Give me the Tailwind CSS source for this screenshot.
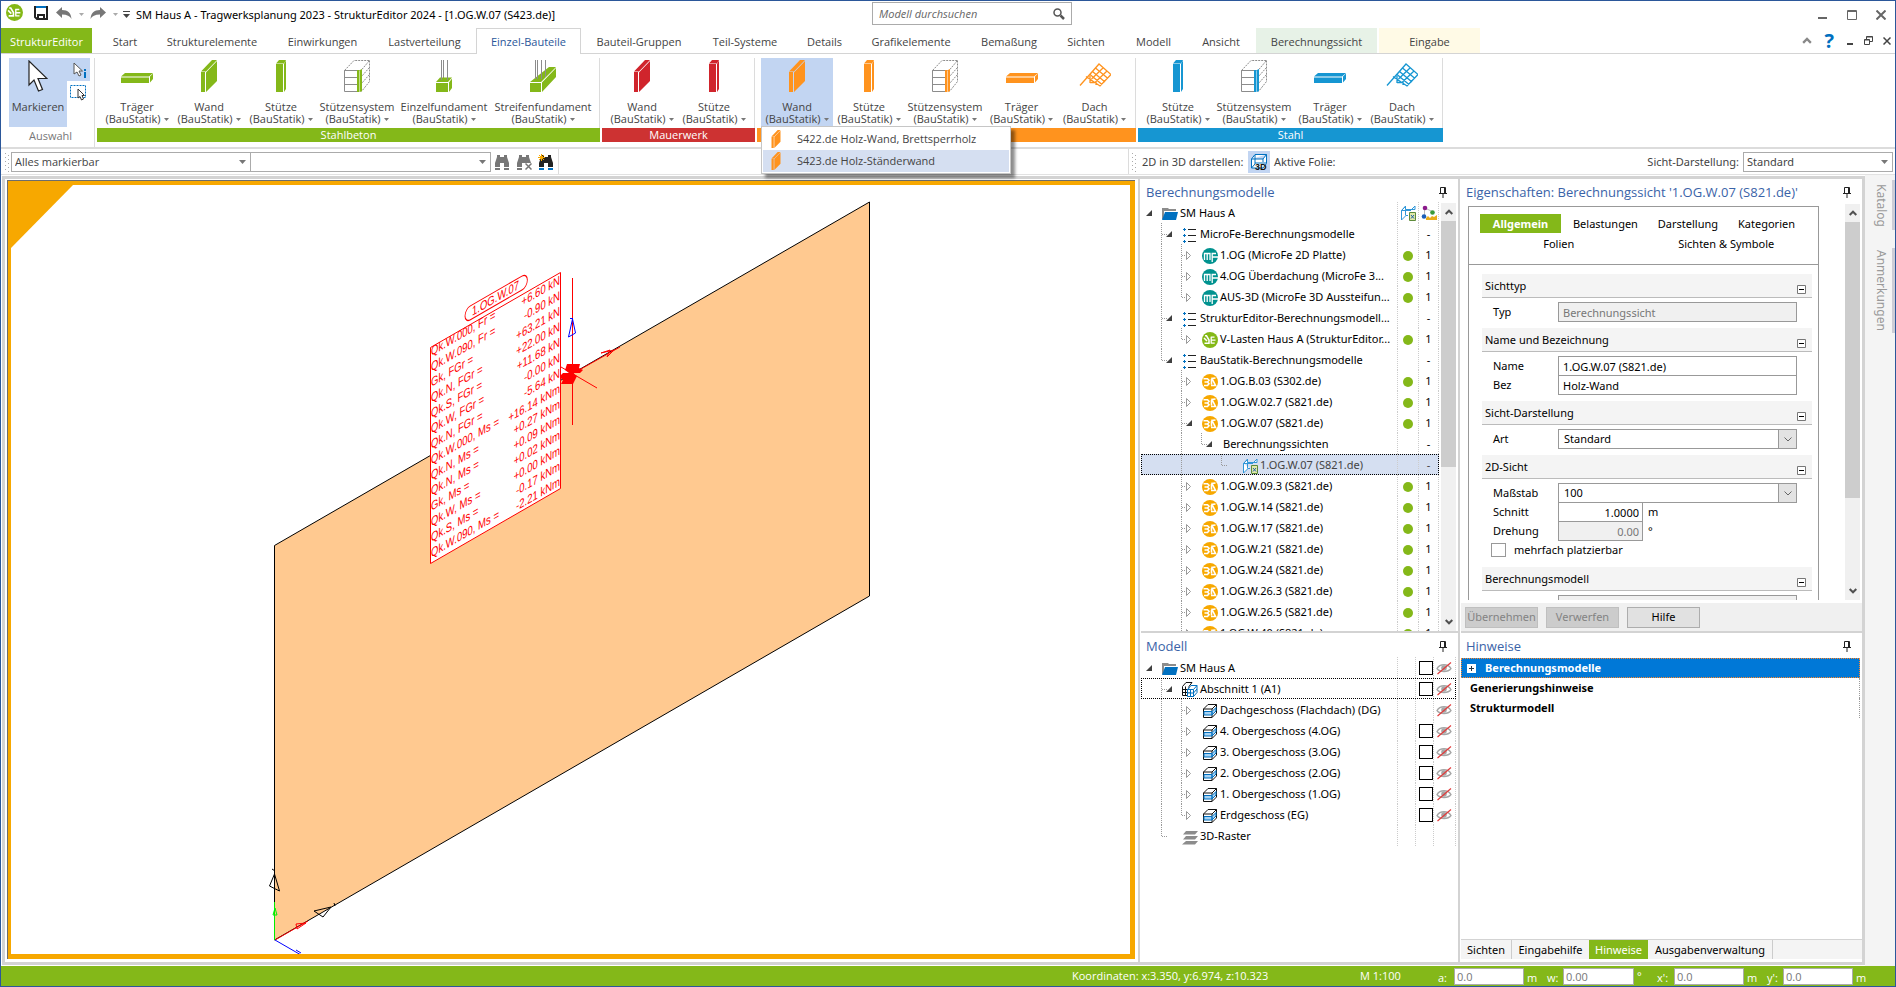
<!doctype html>
<html lang="de" class="h-full">

<head>
    <meta charset="utf-8">
    <meta name="viewport" content="width=device-width, initial-scale=1">
    <title>SM Haus A - Tragwerksplanung 2023 - StrukturEditor 2024</title>
    <script src="https://cdn.jsdelivr.net/npm/@tailwindcss/browser@4"></script>
</head>

<body class="flex h-full flex-col overflow-hidden border border-[#2b579a] bg-white font-['Open_Sans','Noto_Sans',sans-serif] text-[11px] leading-[16px] text-[#444]">

    <!-- Symbole -->
    <svg class="hidden">
        <symbol id="beam" viewBox="0 0 32 32"><path fill="currentColor" d="M0 16.500 4 13h28l-4 3.500zM0 17.500h28V23H0zM29 16.500l3-3V19l-3 3.500z"/></symbol>
        <symbol id="wall" viewBox="0 0 32 32"><path fill="currentColor" d="M8 11.500 19 0h5L13 11.500zM8 12h4v20H8zM13 12.500 24 1v20L13 32z"/></symbol>
        <symbol id="column" viewBox="0 0 32 32"><path fill="currentColor" d="M11 3.500 14 0h7l-2 3.500zM11 4h7v28h-7zM19 4l2-3.500V29l-2 3z"/></symbol>
        <symbol id="system" viewBox="0 0 32 32">
            <path fill="none" stroke="#8c8c8c" stroke-dasharray="2 1" d="M3.500 10.500 13 .5h15.500L20 10.500zM28.500 .5v21M28.500 7.500l-8 9M28.500 14.500l-8 9M28.500 21.500l-8 10"/>
            <path fill="none" stroke="#8c8c8c" d="M3.500 10.500v21H16M3.500 17.500H16M3.500 24.500H16M3.500 10.500H16"/>
            <path fill="currentColor" d="M16 10h2.500v22H16zM19 10l2-1v22l-2 1z"/>
        </symbol>
        <symbol id="pad" viewBox="0 0 32 32">
            <path fill="none" stroke="#8c8c8c" d="M13.500 0v19M15.500 0v19M19.500 0v18"/>
            <path fill="currentColor" d="M8 22l4-4.500h12L20 22zM8 23h12v9H8zM21 22.500l3-4V28l-3 4z"/>
            <path fill="none" stroke="#8c8c8c" d="M13.500 14v6M19.500 14v6"/>
        </symbol>
        <symbol id="strip" viewBox="0 0 32 32">
            <path fill="currentColor" d="M3 22 22 7h7L14 22zM3 23h11v9H3zM15 22.500 29 8v9L15 32z"/>
            <path fill="none" stroke="#8c8c8c" d="M8.500 0v19M10.500 0v19M14.500 0v19M18.500 0v17"/>
        </symbol>
        <symbol id="roof" viewBox="0 0 32 32"><path fill="none" stroke="currentColor" stroke-width="1.300" d="M1 25.500 20 4l12 10.500-11 11.500L7 16.500M11 22.500h6M11 14.500l12 10M13.500 11.500 26 22M16.500 8 29 18.500M16.500 22 28 11M12.500 19 24 8M9.500 16 20 4M17 21v4M11 16v7"/></symbol>
        <symbol id="se" viewBox="0 0 16 16"><circle cx="8" cy="8" r="8" fill="#84b816"/><path fill="none" stroke="#fff" stroke-width="1.500" d="M3 3.800h1.500L7 8v3.200H2.500M2 6l3 3"/><path fill="none" stroke="#fff" stroke-width="1.300" d="M8.700 5.200h3.800M8.700 8.200h4.800M8.700 11.200h4M9.200 5v6.500"/></symbol>
        <symbol id="mf" viewBox="0 0 16 16"><circle cx="8" cy="8" r="8" fill="#00928f"/><path fill="none" stroke="#fff" stroke-width="1.300" d="M2.500 12V5.500H8V12M5.200 6v6M10.200 14V5.500H14M10.200 9H16"/></symbol>
        <symbol id="bs" viewBox="0 0 16 16"><circle cx="8" cy="8" r="8" fill="#f7a800"/><path fill="none" stroke="#fff" stroke-width="1.600" d="M1.500 4.800h4L7 6.300 5.500 8h-3M5.500 8 7 9.700l-1.500 1.800H2"/><path fill="none" stroke="#fff" stroke-width="1.600" d="M13.500 4 10 4.500l3.500 7H9M9.500 5v5.500"/></symbol>
        <symbol id="folder" viewBox="0 0 16 16"><path fill="#8c8c8c" d="M0 2h6l1 1h7v2H2v8L0 13z"/><path fill="#0070c0" d="M3 6h13l-2 8H0z"/></symbol>
        <symbol id="list" viewBox="0 0 16 16"><path fill="#0070c0" d="M1 2h1V1h1v1h1v1H3v1H2V3H1zM1 8h1V7h1v1h1v1H3v1H2V9H1zM1 14h1v-1h1v1h1v1H3v1H2v-1H1z"/><path fill="#222" d="M6 2h8v1H6zM6 8h8v1H6zM6 14h8v1H6z"/></symbol>
        <symbol id="view" viewBox="0 0 16 16"><path fill="#fff" stroke="#2f96d8" d="M1.500 5.500 5.500 1v3.500H15V1L11.500 4.500M1.500 5.500H11M1.500 5.500V15L6 10.500h2M5.500 4.500v6M5.500 1.500 1.500 5.500"/><path fill="#dfe8a8" stroke="#5d8a3a" d="M9.500 7.500h6v8h-6z"/><path stroke="#1d5fa8" d="M11 10l3 3.500M14 10l-3 3.500"/></symbol>
        <symbol id="graph" viewBox="0 0 16 16"><path stroke="#bbb" fill="none" d="M4 3l8 4M3.500 3v8"/><circle cx="4" cy="3" r="2.300" fill="#8b1a8b"/><circle cx="11.500" cy="7.500" r="2.300" fill="#3a9a3a"/><circle cx="3" cy="11.500" r="2.300" fill="#1d5fb8"/><path fill="#e8ad1a" d="M5 15v-2l2-2 2 2 2-2 2 1 3-2v5z"/></symbol>
        <symbol id="section" viewBox="0 0 16 16"><path fill="#fff" stroke="#111" d="M.5 4.500 4 .5h6L7 4.500v9H.5zM.5 7.500H7M.5 10.500H7M3.500 4.500v9"/><path fill="#fff" stroke="#0070c0" d="M5.500 7.500 9 3.500h6v7l-3.500 4h-6zM5.500 7.500h6l3.500-4M11.500 7.500v7M5.500 11h6L15 7M8.500 7.500v7"/></symbol>
        <symbol id="storey" viewBox="0 0 16 16"><path fill="#fff" stroke="#111" d="M1.500 6 6 1.500h8.500V10L10 14.500H1.500zM1.500 6H10l4.500-4.500M10 6v8.500"/><path fill="#a8d3f3" stroke="#0070c0" d="M2 8.500h8v3.500H2zM10 8.500 14 4.500V8l-4 4z"/></symbol>
        <symbol id="raster" viewBox="0 0 16 16"><path fill="#8c8c8c" d="M4 2h12l-3 3.500H1zM4 7h12l-3 3.500H1zM4 12h12l-3 3.500H0z"/></symbol>
        <symbol id="eye" viewBox="0 0 16 16"><path fill="none" stroke="#a5a5a5" stroke-width="1.300" d="M1 8.500C4 3.500 12 3.500 15 8.500 12 12.500 4 12.500 1 8.500z"/><circle cx="8" cy="8" r="2.800" fill="#a5a5a5"/><path stroke="#e23b3b" stroke-width="1.200" d="M1.500 14 15 2.500"/></symbol>
        <symbol id="pin" viewBox="0 0 10 12"><path fill="none" stroke="#222" d="M2.500 7V1.500h5V7M1 7.500h8M5 8v4M6.500 2v5"/></symbol>
        <symbol id="binoculars" viewBox="0 0 16 16"><path fill="currentColor" d="M3 1h3v2h4V1h3v2l2 6v4h-5V9H6v4H1V9l2-6z"/><path fill="var(--foot)" d="M1 14h5v2H1zM10 14h5v2h-5z"/></symbol>
        <symbol id="caret" viewBox="0 0 7 4"><path fill="currentColor" d="M0 0h7L3.500 4z"/></symbol>
        <symbol id="up" viewBox="0 0 8 6"><path fill="none" stroke="currentColor" stroke-width="2" d="M.7 5 4 1.700 7.300 5"/></symbol>
        <symbol id="down" viewBox="0 0 8 6"><path fill="none" stroke="currentColor" stroke-width="2" d="M.7 1 4 4.300 7.300 1"/></symbol>
        <symbol id="cursor" viewBox="0 0 20 32"><path fill="#fff" stroke="#222" stroke-width="1.200" d="M1 1v24l5-5 4.500 11 4-1.500-4.500-11h9z"/></symbol>
        <!-- Baumlinien -->
        <symbol id="guide-I" viewBox="0 0 20 21"><path stroke="#999" stroke-dasharray="1 1" d="M.5 0v21"/></symbol>
        <symbol id="guide-T" viewBox="0 0 20 21"><path stroke="#999" stroke-dasharray="1 1" d="M.5 0v21M1 11.500h5"/></symbol>
        <symbol id="guide-L" viewBox="0 0 20 21"><path stroke="#999" stroke-dasharray="1 1" d="M.5 0v11M1 11.500h6"/></symbol>
        <symbol id="guide-N" viewBox="0 0 20 21"></symbol>
        <symbol id="tw-open" viewBox="0 0 20 21"><path fill="#404040" d="M5 14h6V8z"/></symbol>
        <symbol id="tw-closed" viewBox="0 0 20 21"><path fill="#fff" stroke="#999" d="M5.500 7.500v8l4-4z"/></symbol>
        <symbol id="tw-none" viewBox="0 0 20 21"></symbol>
    </svg>

    <!-- Titelleiste -->
    <header class="relative flex h-[27px] shrink-0 items-center pt-1 pl-[5px] text-black">
        <svg class="mb-2 size-[17px]"><use href="#se"/></svg>
        <button aria-label="Speichern" class="mb-2 ml-[11px]"><svg class="h-[14px] w-[14px]" viewBox="0 0 14 14"><path fill="none" stroke="#222" stroke-width="2" d="M1 1h12v12H3L1 11zM4 13V9h6v4"/><path fill="#0070c0" d="M2 0h10v2H2z"/></svg></button>
        <button aria-label="Rückgängig" class="mb-2 ml-2"><svg class="h-[12px] w-4" viewBox="0 0 16 12"><path fill="#777" d="M6 0v3c6 0 9 3 9.500 9C14 9 11 7.500 6 7.500V11L0 5.500z"/></svg></button>
        <svg class="mb-1 ml-[7px] h-[3px] w-[5px] text-[#aaa]"><use href="#caret"/></svg>
        <button aria-label="Wiederholen" class="mb-2 ml-[6px]"><svg class="h-[12px] w-4" viewBox="0 0 16 12"><path fill="#777" d="M10 0v3C4 3 1 6 .5 12 2 9 5 7.500 10 7.500V11l6-5.500z"/></svg></button>
        <svg class="mb-1 ml-[7px] h-[3px] w-[5px] text-[#aaa]"><use href="#caret"/></svg>
        <svg class="mb-1 ml-[5px] h-[7px] w-[7px]" viewBox="0 0 7 7"><path fill="#444" d="M0 0h7v1H0zM0 3h7L3.500 7z"/></svg>
        <h1 class="mb-1 ml-[6px] font-['Noto_Sans','Open_Sans',sans-serif] whitespace-nowrap">SM Haus A - Tragwerksplanung 2023 - StrukturEditor 2024 - [1.OG.W.07 (S423.de)]</h1>
        <label class="absolute top-[1px] left-[871px] flex h-[23px] w-[200px] items-center border border-[#ababab] bg-white px-[6px]">
            <input type="text" aria-label="Modell durchsuchen" placeholder="Modell durchsuchen" class="min-w-0 flex-1 italic outline-none placeholder:text-[#666]">
            <svg class="size-3" viewBox="0 0 12 12"><circle cx="4.500" cy="4.500" r="3.500" fill="none" stroke="#555" stroke-width="1.500"/><path stroke="#555" stroke-width="2.500" d="M7.500 7.500 11 11"/></svg>
        </label>
        <div class="mb-1 ml-auto flex items-center gap-[19px] pr-[9px]">
            <button aria-label="Minimieren"><svg class="size-[10px]" viewBox="0 0 10 10"><path fill="#666" d="M0 7h9v2H0z"/></svg></button>
            <button aria-label="Maximieren"><svg class="size-[10px]" viewBox="0 0 10 10"><path fill="none" stroke="#666" d="M.5 .5h9v9h-9zM0 1.500h10"/></svg></button>
            <button aria-label="Schließen"><svg class="size-[10px]" viewBox="0 0 10 10"><path stroke="#666" stroke-width="2" d="M.5 .5l9 9M9.500 .5l-9 9"/></svg></button>
        </div>
    </header>

    <!-- Registerkarten -->
    <nav class="flex h-[26px] shrink-0 items-stretch border-b border-[#d4d4d4] whitespace-nowrap">
        <button class="w-[91px] bg-[#84b819] pt-[2px] text-white">StrukturEditor</button>
        <button class="ml-[6px] w-[54px] pt-[2px]">Start</button>
        <button class="w-[120px] pt-[2px]">Strukturelemente</button>
        <button class="w-[101px] pt-[2px]">Einwirkungen</button>
        <button class="w-[103px] pt-[2px]">Lastverteilung</button>
        <button class="-mb-px w-[105px] border border-b-0 border-[#d4d4d4] bg-white pt-px text-[#2b579a]">Einzel-Bauteile</button>
        <button class="w-[116px] pt-[2px]">Bauteil-Gruppen</button>
        <button class="w-[96px] pt-[2px]">Teil-Systeme</button>
        <button class="w-[63px] pt-[2px]">Details</button>
        <button class="w-[110px] pt-[2px]">Grafikelemente</button>
        <button class="w-[86px] pt-[2px]">Bemaßung</button>
        <button class="w-[68px] pt-[2px]">Sichten</button>
        <button class="w-[67px] pt-[2px]">Modell</button>
        <button class="w-[68px] pt-[2px]">Ansicht</button>
        <button class="ml-px w-[121px] bg-[#e7f2e7] pt-[2px]">Berechnungssicht</button>
        <button class="ml-[2px] w-[101px] bg-[#fffae6] pt-[2px]">Eingabe</button>
        <div class="ml-auto flex items-center gap-[10px] pr-1">
            <svg class="h-[7px] w-[10px] text-[#888]"><use href="#up"/></svg>
            <button class="px-[2px] text-[20px] font-bold text-[#0070c0]">?</button>
            <button aria-label="Fenster minimieren"><svg class="size-2" viewBox="0 0 8 8"><path fill="#444" d="M1 6h6v2H1z"/></svg></button>
            <button aria-label="Fenster wiederherstellen"><svg class="size-[9px]" viewBox="0 0 9 9"><path fill="none" stroke="#444" d="M2.500 3V.5h6v5H6M.5 3.500h5v5h-5zM.5 4h5M2.500 1h6"/></svg></button>
            <button aria-label="Fenster schließen"><svg class="size-2" viewBox="0 0 8 8"><path stroke="#444" stroke-width="1.500" d="M.5 .5l7 7M7.500 .5l-7 7"/></svg></button>
        </div>
    </nav>

    <!-- Menüband -->
    <section class="flex h-[95px] shrink-0 border-b-2 border-[#dcdcdc] pt-1 pl-2">
        <div class="mr-[2px] flex w-[86px] flex-col border-r border-[#dcdcdc]">
            <div class="flex">
                <button class="flex h-[69px] w-[58px] flex-col items-center bg-[#c2d5f2] pt-[2px]">
                    <svg class="h-[32px] w-5"><use href="#cursor"/></svg>
                    <span class="mt-2 leading-[14px]">Markieren</span>
                </button>
                <div class="flex flex-col">
                    <button aria-label="Info" class="h-[23px] w-[23px] bg-[#c2d5f2] pl-[6px]"><svg class="h-4 w-[14px]" viewBox="0 0 14 16"><path fill="#fff" stroke="#555" d="M1 1v11l3-2 2 4 2-1-2-4h3.500z"/><path fill="#0070c0" d="M11 7h2v2h-2zM11 10h2v6h-2z"/></svg></button>
                    <button aria-label="Bereich" class="h-[23px] w-[23px] pl-[3px]"><svg class="size-4" viewBox="0 0 16 16"><path fill="none" stroke="#0070c0" stroke-dasharray="2 1" d="M.5 .5h15v12H.5z"/><path fill="#fff" stroke="#333" d="M8 4v9l2-1.500L11.500 15l2-1-1.500-3.500h2.500z"/></svg></button>
                </div>
            </div>
            <span class="pl-5 leading-[18px] text-[#777]">Auswahl</span>
        </div>
        <div id="ribbon" class="flex flex-1"></div>
    </section>

    <!-- Werkzeugleiste -->
    <section class="flex h-[26px] shrink-0 items-center border-b border-[#e2e2e2]">
        <div class="ml-[3px] flex h-full items-center">
            <svg class="mr-[1px] h-5 w-[6px]" viewBox="0 0 6 20"><path stroke="#aaa" stroke-dasharray="1 3" d="M1.500 1v18M4.500 3v17"/></svg>
            <div class="relative">
                <select aria-label="Markierfilter" class="h-5 w-[240px] appearance-none border border-[#ababab] bg-white pl-[3px]"><option>Alles markierbar</option></select>
                <svg class="pointer-events-none absolute top-2 right-[5px] h-1 w-[7px] text-[#777]"><use href="#caret"/></svg>
            </div>
            <div class="relative -ml-px">
                <select aria-label="Suchfilter" class="h-5 w-[241px] appearance-none border border-[#ababab] bg-white pl-[3px]"><option></option></select>
                <svg class="pointer-events-none absolute top-2 right-[5px] h-1 w-[7px] text-[#777]"><use href="#caret"/></svg>
            </div>
            <button aria-label="Suchen" class="ml-[3px] text-[#777] [--foot:#777]"><svg class="size-4"><use href="#binoculars"/></svg></button>
            <button aria-label="Suche löschen" class="relative ml-[6px] text-[#777] [--foot:#777]"><svg class="size-4"><use href="#binoculars"/></svg><svg class="absolute right-0 bottom-0 size-[7px] bg-white" viewBox="0 0 7 7"><path stroke="#777" stroke-width="1.500" d="M.5 .5l6 6M6.500 .5l-6 6"/></svg></button>
            <button aria-label="Erweitert suchen" class="relative ml-[6px] text-[#222] [--foot:#0070c0]"><svg class="size-4"><use href="#binoculars"/></svg><svg class="absolute top-0 left-0 size-[7px]" viewBox="0 0 7 7"><path stroke="#f7a800" d="M3.500 0v7M0 3.500h7M1 1l5 5M6 1 1 6"/></svg></button>
            <div class="ml-1 h-full border-r border-[#dcdcdc]"></div>
        </div>
        <div class="ml-auto flex h-full w-[767px] items-center border-l border-[#dcdcdc] pr-[2px] font-['Noto_Sans','Open_Sans',sans-serif]">
            <svg class="ml-[2px] h-5 w-[6px]" viewBox="0 0 6 20"><path stroke="#aaa" stroke-dasharray="1 3" d="M1.500 1v18M4.500 3v17"/></svg>
            <span class="ml-[5px] w-[106px] whitespace-nowrap">2D in 3D darstellen:</span>
            <button aria-label="3D" class="flex h-[22px] w-[22px] items-center justify-center bg-[#c2d5f2]"><svg class="size-[18px]" viewBox="0 0 18 18"><path fill="#fff" stroke="#0070c0" d="M1.500 6 5 1.500h11.500v9L13 15H1.500zM1.500 6H13l3.500-4.500M13 6v3M5 2v9l-3.500 4M5 10h11"/><text x="5" y="17" font-size="9" font-weight="700" font-family="Liberation Sans" fill="#111">3D</text></svg></button>
            <span class="ml-1">Aktive Folie:</span>
            <label for="darstellung" class="ml-auto mr-1">Sicht-Darstellung:</label>
            <div class="relative">
                <select id="darstellung" class="h-5 w-[150px] appearance-none border border-[#ababab] bg-white pl-[3px]"><option>Standard</option></select>
                <svg class="pointer-events-none absolute top-2 right-[5px] h-1 w-[7px] text-[#777]"><use href="#caret"/></svg>
            </div>
        </div>
    </section>

    <!-- Arbeitsbereich -->
    <main class="flex min-h-0 flex-1 font-['Noto_Sans','Open_Sans',sans-serif]">
        <div class="my-px ml-px flex min-w-0 flex-1 border-[3px] border-[#d3d3d3]">
            <div class="min-w-0 flex-1 pt-px pr-[3px] pb-[3px] pl-[2px]">
                <div class="h-full border-t border-l border-[#6d6d6d]">
                    <div class="h-full border-t-4 border-r-[5px] border-b-[5px] border-l-[3px] border-[#f7a800]">
                        <svg id="canvas" class="block h-full w-full" viewBox="11 185 1119 769" preserveAspectRatio="xMinYMin meet">
                            <path fill="#f7a800" d="M11 185h62L11 248z"/>
                            <path fill="#ffc990" stroke="#000" d="M274.500 545.500 869.500 202v394L274.500 940z"/>
                            <!-- Knoten mit Lastpfeilen -->
                            <path stroke="#f00" fill="none" d="M561 367l36 21M572 374l48-27M601 353l13-3-7 7 3-7-9 3"/>
                            <path stroke="#f00" d="M572.500 278v147"/>
                            <path fill="#f00" d="M567 364h13l-1 4 4 2-3 3h-7l4 3-4 8h-12l2-4-4-3 4-4h6l-4-3z"/>
                            <path stroke="#00f" fill="none" d="M568.500 337l4-18 3 14-7 4M570 318.500h3"/>
                            <!-- Lastetikett -->
                            <path fill="#fff" stroke="#f00" d="M430.500 347.500 560.500 272.500v216l-130 75z"/>
                            <g fill="none" stroke="#f00"><rect width="72" height="12" rx="6" transform="translate(465 309) rotate(-30) skewX(-30)"/></g>
                            <g id="loads" fill="#f00" font-family="Liberation Sans, sans-serif" font-size="11"></g>
                            <!-- Achsenkreuz -->
                            <path stroke="#000" fill="none" d="M274.500 874l-5 12 10 5zM272 869l3 2M331 907l-17 4 9 6zM334 903l1 3"/>
                            <path stroke="#0e0" fill="none" d="M274.500 940v-38M275 908l-2 7h4z"/>
                            <path stroke="#f00" fill="none" d="M275 940l33-19M296 924l10-1-9 6z"/>
                            <path stroke="#00f" fill="none" d="M275 940l26 15M296 950l5 3"/>
                        </svg>
                    </div>
                </div>
            </div>

            <!-- Berechnungsmodelle / Modell -->
            <div class="flex w-[320px] flex-col border-l-2 border-[#d3d3d3] pl-px text-black">
                <section class="flex min-h-0 flex-[452_452_0px] flex-col">
                    <header class="flex h-[23px] shrink-0 items-center pt-[2px] pr-[10px] pl-[5px]"><h2 class="flex-1 font-['Open_Sans','Noto_Sans',sans-serif] text-[13px] text-[#3a63a8]">Berechnungsmodelle</h2><svg class="h-3 w-[10px]"><use href="#pin"/></svg></header>
                    <div class="flex min-h-0 flex-1">
                        <ul id="calc-tree" class="mr-[2px] min-w-0 flex-1 overflow-hidden"></ul>
                        <div class="mt-px mr-[2px] flex w-[15px] flex-col items-center bg-[#f0f0f0] text-[#505050]">
                            <svg class="my-[6px] h-[6px] w-2 shrink-0"><use href="#up"/></svg>
                            <div class="w-full flex-[245_245_0px] bg-[#cdcdcd]"></div>
                            <div class="flex-[146_146_0px]"></div>
                            <svg class="my-[6px] h-[6px] w-2 shrink-0"><use href="#down"/></svg>
                        </div>
                    </div>
                </section>
                <section class="flex min-h-0 flex-[329_329_0px] flex-col border-t-2 border-[#d3d3d3]">
                    <header class="flex h-[24px] shrink-0 items-center pt-px pr-[10px] pl-[5px]"><h2 class="flex-1 font-['Open_Sans','Noto_Sans',sans-serif] text-[13px] text-[#3a63a8]">Modell</h2><svg class="h-3 w-[10px]"><use href="#pin"/></svg></header>
                    <ul id="model-tree" class="mr-[2px]"></ul>
                </section>
            </div>

            <!-- Eigenschaften / Hinweise -->
            <div class="flex w-[404px] flex-col border-l-2 border-[#d3d3d3] pl-px text-black">
                <section class="flex min-h-0 flex-[452_452_0px] flex-col">
                    <header class="flex h-[25px] shrink-0 items-center pr-[10px] pl-[5px]"><h2 class="flex-1 font-['Open_Sans','Noto_Sans',sans-serif] text-[13px] whitespace-nowrap text-[#3a63a8]">Eigenschaften: Berechnungssicht '1.OG.W.07 (S821.de)'</h2><svg class="h-3 w-[10px]"><use href="#pin"/></svg></header>
                    <div class="mb-[3px] flex min-h-0 flex-1">
                        <div class="flex-1 overflow-hidden pt-[2px] pr-[26px] pl-[7px]">
                            <div class="h-[600px] border border-[#999]">
                                <nav class="h-[58px] border-b border-[#999] pt-[7px] pr-[23px] pl-[11px]">
                                    <div class="flex h-[19px] items-stretch justify-between whitespace-nowrap">
                                        <button class="w-[81px] bg-[#84b819] font-bold text-white">Allgemein</button>
                                        <button>Belastungen</button>
                                        <button class="ml-2">Darstellung</button>
                                        <button class="ml-2">Kategorien</button>
                                    </div>
                                    <div class="mt-px flex h-5 items-center">
                                        <button class="w-1/2">Folien</button>
                                        <button class="w-1/2 pl-5">Sichten &amp; Symbole</button>
                                    </div>
                                </nav>
                                <form id="props" class="mt-[9px] mr-[6px] ml-[13px]">
                                    <h3 class="flex h-6 items-center justify-between border-b border-[#bbb] bg-[#f4f4f4] pr-[6px] pl-[3px]">Sichttyp <svg class="mt-2 size-[9px]" viewBox="0 0 9 9"><path fill="#fff" stroke="#777" d="M.5 .5h8v8h-8z"/><path stroke="#000" d="M2 4.500h5"/></svg></h3>
                                    <div class="flex items-center pt-1 pb-[6px] pl-[11px]">
                                        <label for="typ" class="w-[65px]">Typ</label>
                                        <input id="typ" disabled value="Berechnungssicht" class="h-5 w-[239px] border border-[#999] bg-[#f0f0f0] px-1 text-[#777]">
                                    </div>
                                    <h3 class="flex h-6 items-center justify-between border-b border-[#bbb] bg-[#f4f4f4] pr-[6px] pl-[3px]">Name und Bezeichnung <svg class="mt-2 size-[9px]" viewBox="0 0 9 9"><path fill="#fff" stroke="#777" d="M.5 .5h8v8h-8z"/><path stroke="#000" d="M2 4.500h5"/></svg></h3>
                                    <div class="flex items-center pt-1 pl-[11px]">
                                        <label for="name" class="w-[65px]">Name</label>
                                        <input id="name" value="1.OG.W.07 (S821.de)" class="h-5 w-[239px] border border-[#999] px-1">
                                    </div>
                                    <div class="-mt-px flex items-center pb-[6px] pl-[11px]">
                                        <label for="bez" class="w-[65px]">Bez</label>
                                        <input id="bez" value="Holz-Wand" class="h-5 w-[239px] border border-[#999] px-1">
                                    </div>
                                    <h3 class="flex h-6 items-center justify-between border-b border-[#bbb] bg-[#f4f4f4] pr-[6px] pl-[3px]">Sicht-Darstellung <svg class="mt-2 size-[9px]" viewBox="0 0 9 9"><path fill="#fff" stroke="#777" d="M.5 .5h8v8h-8z"/><path stroke="#000" d="M2 4.500h5"/></svg></h3>
                                    <div class="flex items-center pt-1 pb-[6px] pl-[11px]">
                                        <label for="art" class="w-[65px]">Art</label>
                                        <div class="relative">
                                            <select id="art" class="block h-5 w-[239px] appearance-none border border-[#999] px-[5px]"><option>Standard</option></select>
                                            <span class="pointer-events-none absolute top-0 right-0 flex h-5 w-[19px] items-center justify-center border border-[#999] bg-[#e3e3e3]"><svg class="h-[5px] w-2" viewBox="0 0 8 5"><path fill="none" stroke="#666" d="M.5 .5 4 4 7.500 .5"/></svg></span>
                                        </div>
                                    </div>
                                    <h3 class="flex h-6 items-center justify-between border-b border-[#bbb] bg-[#f4f4f4] pr-[6px] pl-[3px]">2D-Sicht <svg class="mt-2 size-[9px]" viewBox="0 0 9 9"><path fill="#fff" stroke="#777" d="M.5 .5h8v8h-8z"/><path stroke="#000" d="M2 4.500h5"/></svg></h3>
                                    <div class="flex items-center pt-1 pl-[11px]">
                                        <label for="mass" class="w-[65px]">Maßstab</label>
                                        <div class="relative">
                                            <select id="mass" class="block h-5 w-[239px] appearance-none border border-[#999] px-[5px]"><option>100</option></select>
                                            <span class="pointer-events-none absolute top-0 right-0 flex h-5 w-[19px] items-center justify-center border border-[#999] bg-[#e3e3e3]"><svg class="h-[5px] w-2" viewBox="0 0 8 5"><path fill="none" stroke="#666" d="M.5 .5 4 4 7.500 .5"/></svg></span>
                                        </div>
                                    </div>
                                    <div class="-mt-px flex items-center pl-[11px]">
                                        <label for="schnitt" class="w-[65px]">Schnitt</label>
                                        <input id="schnitt" value="1.0000" class="h-5 w-[85px] border border-[#999] px-[3px] text-right">
                                        <span class="ml-[5px]">m</span>
                                    </div>
                                    <div class="-mt-px flex items-center pl-[11px]">
                                        <label for="drehung" class="w-[65px]">Drehung</label>
                                        <input id="drehung" disabled value="0.00" class="h-5 w-[85px] border border-[#999] bg-[#f0f0f0] px-[3px] text-right text-[#777]">
                                        <span class="ml-[5px]">°</span>
                                    </div>
                                    <div class="flex h-[26px] items-start pt-[2px] pl-[9px]">
                                        <input type="checkbox" id="mehrfach" class="mr-2 h-[14px] w-[15px] appearance-none border border-[#999]">
                                        <label for="mehrfach" class="leading-[14px]">mehrfach platzierbar</label>
                                    </div>
                                    <h3 class="flex h-6 items-center justify-between border-b border-[#bbb] bg-[#f4f4f4] pr-[6px] pl-[3px]">Berechnungsmodell <svg class="mt-2 size-[9px]" viewBox="0 0 9 9"><path fill="#fff" stroke="#777" d="M.5 .5h8v8h-8z"/><path stroke="#000" d="M2 4.500h5"/></svg></h3>
                                    <div class="flex items-center pt-1 pl-[11px]">
                                        <label for="modellname" class="w-[65px]">Name</label>
                                        <input id="modellname" disabled value="1.OG.W.07 (S821.de)" class="h-5 w-[239px] border border-[#999] bg-[#f0f0f0] px-1 text-[#777]">
                                    </div>
                                </form>
                            </div>
                        </div>
                        <div class="mr-[2px] flex w-[15px] flex-col items-center bg-[#f0f0f0] text-[#505050]">
                            <svg class="my-[6px] h-[6px] w-2 shrink-0"><use href="#up"/></svg>
                            <div class="w-full flex-[277_277_0px] bg-[#cdcdcd]"></div>
                            <div class="flex-[84_84_0px]"></div>
                            <svg class="my-[6px] h-[6px] w-2 shrink-0"><use href="#down"/></svg>
                        </div>
                    </div>
                    <div class="flex h-[28px] shrink-0 items-center gap-2 bg-[#f0f0f0] pl-1">
                        <button disabled class="h-[21px] w-[73px] border border-[#bfbfbf] bg-[#ccc] text-[#838383]">Übernehmen</button>
                        <button disabled class="h-[21px] w-[73px] border border-[#bfbfbf] bg-[#ccc] text-[#838383]">Verwerfen</button>
                        <button class="h-[21px] w-[73px] border border-[#adadad] bg-[#e1e1e1]">Hilfe</button>
                    </div>
                </section>
                <section class="flex min-h-0 flex-[326_326_0px] flex-col border-t-2 border-[#d3d3d3] pb-[3px]">
                    <header class="flex h-[25px] shrink-0 items-center pr-[10px] pl-[5px]"><h2 class="flex-1 font-['Open_Sans','Noto_Sans',sans-serif] text-[13px] text-[#3a63a8]">Hinweise</h2><svg class="h-3 w-[10px]"><use href="#pin"/></svg></header>
                    <ul class="mr-[2px] flex-1 font-bold">
                        <li class="flex h-5 items-center border border-dotted border-[#ff8728] bg-[#0078d7] pl-[5px] text-white"><svg class="mr-[9px] size-[9px]" viewBox="0 0 9 9"><path fill="#fff" d="M0 0h9v9H0z"/><path stroke="#234" d="M2 4.500h5M4.500 2v5"/></svg>Berechnungsmodelle</li>
                        <li class="flex h-5 items-center border-r border-dotted border-[#999] pl-[9px]">Generierungshinweise</li>
                        <li class="flex h-5 items-center border-r border-dotted border-[#999] pl-[9px]">Strukturmodell</li>
                    </ul>
                    <nav class="flex h-[20px] shrink-0 items-stretch border-t border-[#d3d3d3] bg-[#f4f4f4] whitespace-nowrap">
                        <button class="w-[51px] border-r border-[#ccc]">Sichten</button>
                        <button class="w-[77px]">Eingabehilfe</button>
                        <button class="w-[59px] bg-[#84b819] text-white">Hinweise</button>
                        <button class="w-[125px] border-r border-[#ccc]">Ausgabenverwaltung</button>
                    </nav>
                </section>
            </div>
        </div>
        <aside class="flex w-[30px] flex-col items-end bg-[#f4f4f4] pt-[5px] text-[12px] text-[#999]">
            <button class="flex h-[50px] w-[26px] items-center justify-center border-r-3 border-[#cdcdd6] [writing-mode:vertical-rl]">Katalog</button>
            <button class="mt-[18px] flex h-[85px] w-[26px] items-center justify-center border-r-3 border-[#cdcdd6] [writing-mode:vertical-rl]">Anmerkungen</button>
        </aside>
    </main>

    <!-- Statuszeile -->
    <footer class="flex h-[20px] shrink-0 items-center justify-end bg-[#84b819] pr-[24px] whitespace-nowrap text-white">
        <span class="w-[288px]">Koordinaten: x:3.350, y:6.974, z:10.323</span>
        <span class="w-[78px]">M 1:100</span>
        <label for="sa" class="w-4 pt-1">a:</label><input id="sa" value="0.0" class="h-[17px] w-[70px] border border-[#ababab] bg-white px-[2px] text-[#777]"><span class="w-[23px] pt-1 pl-[3px]">m</span>
        <label for="sw" class="w-4 pt-1">w:</label><input id="sw" value="0.00" class="h-[17px] w-[71px] border border-[#ababab] bg-white px-[2px] text-[#777]"><span class="w-[23px] pl-[3px]">°</span>
        <label for="sx" class="w-[17px] pt-1">x':</label><input id="sx" value="0.0" class="h-[17px] w-[70px] border border-[#ababab] bg-white px-[2px] text-[#777]"><span class="w-[23px] pt-1 pl-[3px]">m</span>
        <label for="sy" class="w-4 pt-1">y':</label><input id="sy" value="0.0" class="h-[17px] w-[70px] border border-[#ababab] bg-white px-[2px] text-[#777]"><span class="w-[18px] pt-1 pl-[3px]">m</span>
    </footer>

    <!-- Aufklappmenü Wand (BauStatik) -->
    <div role="menu" class="absolute top-[126px] left-[761px] w-[250px] border border-[#c6c6c6] bg-white p-px shadow-[4px_4px_3px_rgba(0,0,0,0.45)]">
        <button role="menuitem" class="flex h-[22px] w-full items-center pl-[4px]"><svg class="mr-[12px] size-[18px] text-[#ff931e]"><use href="#wall"/></svg>S422.de Holz-Wand, Brettsperrholz</button>
        <button role="menuitem" class="flex h-[22px] w-full items-center bg-[#d5dff1] pl-[4px]"><svg class="mr-[12px] size-[18px] text-[#ff931e]"><use href="#wall"/></svg>S423.de Holz-Ständerwand</button>
    </div>

    <script>
        // Menüband: Gruppen mit [Symbol, Text, Breitenklasse]
        const groups = [
            { name: 'Stahlbeton', bar: 'bg-[#84b819]', color: 'text-[#84b819]', items: [['beam', 'Träger', 'w-[72px]'], ['wall', 'Wand', 'w-[72px]'], ['column', 'Stütze', 'w-[72px]'], ['system', 'Stützensystem', 'w-[80px]'], ['pad', 'Einzelfundament', 'w-[94px]'], ['strip', 'Streifenfundament', 'w-[104px]']] },
            { name: 'Mauerwerk', bar: 'bg-[#cd3232]', color: 'text-[#d0242c]', items: [['wall', 'Wand', 'w-[72px]'], ['column', 'Stütze', 'w-[72px]']] },
            { name: '', bar: 'bg-[#ff931e]', color: 'text-[#ff931e]', items: [['wall', 'Wand', 'w-[72px] bg-[#c2d5f2]'], ['column', 'Stütze', 'w-[72px]'], ['system', 'Stützensystem', 'w-[80px]'], ['beam', 'Träger', 'w-[73px]'], ['roof', 'Dach', 'w-[73px]']] },
            { name: 'Stahl', bar: 'bg-[#1696d2]', color: 'text-[#1696d2]', items: [['column', 'Stütze', 'w-[72px]'], ['system', 'Stützensystem', 'w-[80px]'], ['beam', 'Träger', 'w-[72px]'], ['roof', 'Dach', 'w-[72px]']] },
        ];
        document.getElementById('ribbon').innerHTML = groups.map(g => `
            <div class="mr-[2px] flex flex-col">
                <div class="flex h-[70px] border-r border-[#dcdcdc] px-[4px]">
                    ${g.items.map(([icon, text, w]) => `
                    <button class="flex h-[69px] flex-col items-center pt-[2px] leading-[12px] whitespace-nowrap ${w}">
                        <svg class="size-8 shrink-0 ${g.color}"><use href="#${icon}"/></svg>
                        <span class="mt-[9px]">${text}</span>
                        <span class="flex items-center gap-[3px]">(BauStatik)<svg class="h-[3px] w-[5px] text-[#777]"><use href="#caret"/></svg></span>
                    </button>`).join('')}
                </div>
                <div class="h-[14px] text-center leading-[14px] text-white ${g.bar}">${g.name}</div>
            </div>`).join('');

        // Baumzeilen: [Linien, Knoten, Symbol, Text, Wert]
        const calc = [
            ['', 'open', 'folder', 'SM Haus A', 'head'],
            ['T', 'open', 'list', 'MicroFe-Berechnungsmodelle', '-'],
            ['IT', 'closed', 'mf', '1.OG (MicroFe 2D Platte)', '1'],
            ['IT', 'closed', 'mf', '4.OG Überdachung (MicroFe 3...', '1'],
            ['IL', 'closed', 'mf', 'AUS-3D (MicroFe 3D Aussteifun...', '1'],
            ['T', 'open', 'list', 'StrukturEditor-Berechnungsmodell...', '-'],
            ['IL', 'closed', 'se', 'V-Lasten Haus A (StrukturEditor...', '1'],
            ['L', 'open', 'list', 'BauStatik-Berechnungsmodelle', '-'],
            ['NT', 'closed', 'bs', '1.OG.B.03 (S302.de)', '1'],
            ['NT', 'closed', 'bs', '1.OG.W.02.7 (S821.de)', '1'],
            ['NT', 'open', 'bs', '1.OG.W.07 (S821.de)', '1'],
            ['NIL', 'open', '', 'Berechnungssichten', '-'],
            ['NINL', 'none', 'view', '1.OG.W.07 (S821.de)', 'sel'],
            ['NT', 'closed', 'bs', '1.OG.W.09.3 (S821.de)', '1'],
            ['NT', 'closed', 'bs', '1.OG.W.14 (S821.de)', '1'],
            ['NT', 'closed', 'bs', '1.OG.W.17 (S821.de)', '1'],
            ['NT', 'closed', 'bs', '1.OG.W.21 (S821.de)', '1'],
            ['NT', 'closed', 'bs', '1.OG.W.24 (S821.de)', '1'],
            ['NT', 'closed', 'bs', '1.OG.W.26.3 (S821.de)', '1'],
            ['NT', 'closed', 'bs', '1.OG.W.26.5 (S821.de)', '1'],
            ['NT', 'closed', 'bs', '1.OG.W.40 (S821.de)', '1'],
        ];
        const model = [
            ['', 'open', 'folder', 'SM Haus A', 'box'],
            ['T', 'open', 'section', 'Abschnitt 1 (A1)', 'sel'],
            ['IT', 'closed', 'storey', 'Dachgeschoss (Flachdach) (DG)', 'eye'],
            ['IT', 'closed', 'storey', '4. Obergeschoss (4.OG)', 'box'],
            ['IT', 'closed', 'storey', '3. Obergeschoss (3.OG)', 'box'],
            ['IT', 'closed', 'storey', '2. Obergeschoss (2.OG)', 'box'],
            ['IT', 'closed', 'storey', '1. Obergeschoss (1.OG)', 'box'],
            ['IL', 'closed', 'storey', 'Erdgeschoss (EG)', 'box'],
            ['L', 'none', 'raster', '3D-Raster', ''],
        ];

        function label([guides, node, icon, text]) {
            const cells = ('N' + guides).split('');
            const lines = cells.map((c, i) => `<svg class="h-[21px] w-5 shrink-0"><use href="#guide-${c}"/>${i === cells.length - 1 ? `<use href="#tw-${node}"/>` : ''}</svg>`).join('');
            const sym = icon ? `<svg class="mt-[2px] mr-[2px] ml-px size-4 shrink-0"><use href="#${icon}"/></svg>` : '<span class="w-[2px]"></span>';
            return `<span class="flex min-w-0 flex-1 items-center whitespace-nowrap">${lines}${sym}${text}</span>`;
        }

        document.getElementById('calc-tree').innerHTML = calc.map(r => {
            const v = r[4];
            const dot = v === 'head' ? '<svg class="size-4 shrink-0"><use href="#view"/></svg>' : v === '1' ? '<span class="mt-[2px] size-[10px] rounded-full bg-[#84b819]"></span>' : '';
            const num = v === 'head' ? '<svg class="size-4 shrink-0"><use href="#graph"/></svg>' : v === 'sel' ? '-' : v;
            const cls = v === 'sel' ? 'bg-[#d5dff1] text-[#444] outline outline-1 -outline-offset-1 outline-dotted outline-black' : '';
            return `<li class="flex h-[21px] ${cls}">${label(r)}<span class="flex w-[21px] items-center justify-center border-l border-dotted border-[#ccc]">${dot}</span><span class="flex w-[21px] items-center justify-center border-x border-dotted border-[#ccc]">${num}</span></li>`;
        }).join('');

        document.getElementById('model-tree').innerHTML = model.map(r => {
            const v = r[4];
            const box = v === 'box' || v === 'sel' ? `<input type="checkbox" aria-label="${r[3]}" class="size-[14px] shrink-0 appearance-none border border-black bg-white">` : '';
            const eye = v ? '<svg class="size-4"><use href="#eye"/></svg>' : '';
            const cls = v === 'sel' ? 'outline outline-1 -outline-offset-1 outline-dotted outline-black' : '';
            return `<li class="flex h-[21px] ${cls}">${label(r)}<span class="w-[18px] border-l border-dotted border-[#ccc]"></span><span class="flex w-[18px] items-center justify-end border-l border-dotted border-[#ccc]">${box}</span><span class="flex w-[23px] items-center border-x border-dotted border-[#ccc] pl-[2px]">${eye}</span></li>`;
        }).join('');

        // Lastetikett, isometrisch beschriftet
        const loads = [
            ['Qk.W.000, Fr =', '+6.60 kN'], ['Qk.W.090, Fr =', '-0.90 kN'], ['Gk, FGr =', '+63.21 kN'], ['Qk.N, FGr =', '+22.00 kN'],
            ['Qk.S, FGr =', '+11.68 kN'], ['Qk.W, FGr =', '-0.00 kN'], ['Qk.N, FGr =', '-5.64 kN'], ['Qk.W.000, Ms =', '+16.14 kNm'],
            ['Qk.N, Ms =', '+0.27 kNm'], ['Qk.N, Ms =', '+0.09 kNm'], ['Gk, Ms =', '+0.02 kNm'], ['Qk.W, Ms =', '+0.00 kNm'],
            ['Qk.S, Ms =', '-0.17 kNm'], ['Qk.W.090, Ms =', '-2.21 kNm'],
        ];
        const iso = (x, y, text, anchor) => `<text text-anchor="${anchor}" transform="translate(${x} ${y}) rotate(-30) skewX(-30)">${text}</text>`;
        document.getElementById('loads').innerHTML = iso(472, 316, '1.OG.W.07', 'start') +
            loads.map(([l, r], i) => iso(431, 356 + i * 15.5, l, 'start') + iso(560, 284 + i * 15.5, r, 'end')).join('');
    </script>
</body>

</html>
